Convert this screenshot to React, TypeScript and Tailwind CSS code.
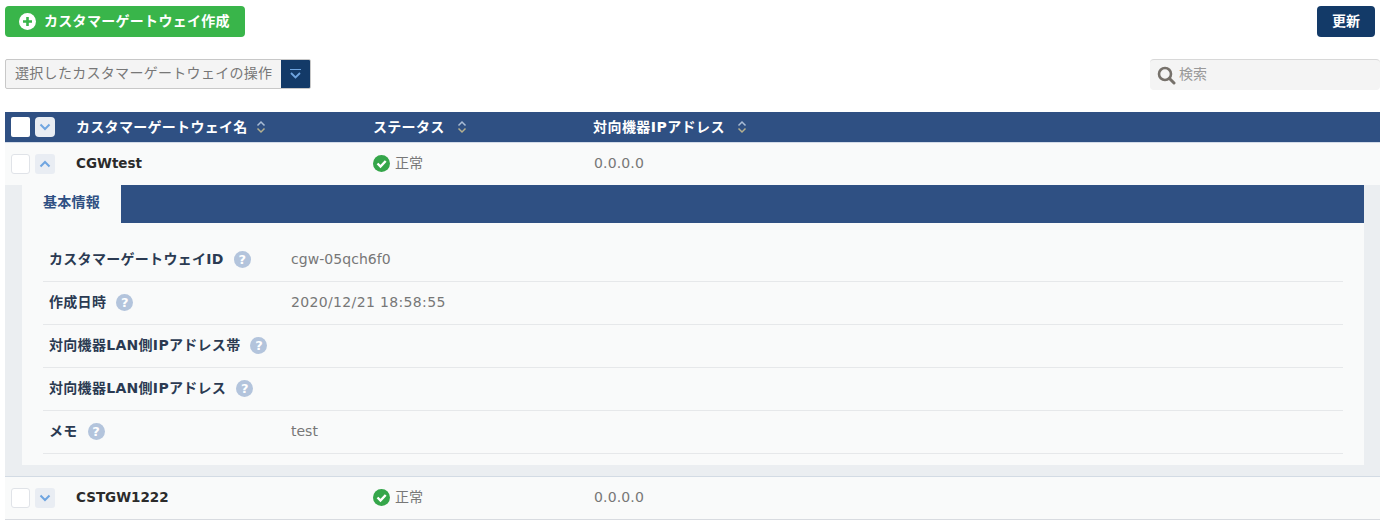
import { Fragment } from 'react';

const font = "font-['DejaVu_Sans','Noto_Sans_CJK_JP',sans-serif]";

const Chevron = ({ up = false }: { up?: boolean }) => (
    <svg width="12" height="8" viewBox="0 0 12 8" className={up ? 'rotate-180' : ''}>
        <path d="M1.5 1.5 6 6l4.5-4.5" fill="none" stroke="#6fa5e0" strokeWidth="2" />
    </svg>
);

const Sort = () => (
    <svg width="10" height="14" viewBox="0 0 10 14">
        <path d="M1.5 5.5 5 2l3.5 3.5" fill="none" stroke="#a9bcd6" strokeWidth="1.5" />
        <path d="M1.5 8.5 5 12l3.5-3.5" fill="none" stroke="#b5b08f" strokeWidth="1.5" />
    </svg>
);

const Help = () => (
    <span className="flex h-[17px] w-[17px] shrink-0 items-center justify-center rounded-full bg-[#b3c4dc] text-[13px] font-bold leading-none tracking-normal text-white">
        ?
    </span>
);

const Check = () => (
    <svg width="17" height="17" viewBox="0 0 17 17" className="shrink-0">
        <circle cx="8.5" cy="8.5" r="8.5" fill="#35a64a" />
        <path d="M4.5 8.5 7.5 11.5 12.7 6" fill="none" stroke="#fff" strokeWidth="2.4" />
    </svg>
);

const Row = ({ name, open }: { name: string; open?: boolean }) => (
    <div className="flex h-[42px] items-center bg-[#f9fafa]">
        <span className="ml-[6px] h-[20px] w-[19px] rounded-[3px] border border-[#e0e3e8] bg-white" />
        <span className="ml-[5px] flex h-[20px] w-[20px] items-center justify-center rounded-[3px] bg-[#e9edf3]">
            <Chevron up={open} />
        </span>
        <span className="ml-[21px] w-[297px] pb-[2px] text-[13.5px] font-bold text-[#2b2b2b]">{name}</span>
        <span className="flex w-[220px] items-center gap-[5px] pb-[2px] text-[14px] text-[#777]">
            <Check />
            正常
        </span>
        <span className="pb-[2px] pl-[1px] text-[14px] tracking-[0.15px] text-[#777]">0.0.0.0</span>
    </div>
);

const details = [
    { label: 'カスタマーゲートウェイID', value: 'cgw-05qch6f0', valueClass: 'tracking-[0.05px]' },
    { label: '作成日時', value: '2020/12/21 18:58:55', valueClass: 'tracking-[0.35px]' },
    { label: '対向機器LAN側IPアドレス帯', value: '', valueClass: '' },
    { label: '対向機器LAN側IPアドレス', value: '', valueClass: '' },
    { label: 'メモ', value: 'test', valueClass: '' },
];

export default function App() {
    return (
        <div className={`${font} h-[527px] w-[1390px] overflow-hidden bg-white pl-[5px] pr-[10px] pt-[6px] text-[14px]`}>
            <div className="flex items-start justify-between">
                <button className="flex h-[31px] w-[240px] items-center rounded-[4px] bg-[#39b54a] pl-[14px] text-[14px] font-bold tracking-[0.3px] text-white">
                    <svg width="17" height="17" viewBox="0 0 17 17" className="mr-[8px]">
                        <circle cx="8.5" cy="8.5" r="8.5" fill="#fff" />
                        <path d="M8.5 4v9M4 8.5h9" stroke="#39b54a" strokeWidth="2.6" />
                    </svg>
                    カスタマーゲートウェイ作成
                </button>
                <button className="mr-[5px] h-[31px] w-[58px] rounded-[4px] bg-[#133a68] text-[14px] font-bold text-white">更新</button>
            </div>

            <div className="mt-[22px] flex items-start justify-between">
                <div className="flex h-[30px] w-[306px] overflow-hidden rounded-[2px] border border-[#c8c8c8] bg-[#f4f4f4]">
                    <span className="flex-1 truncate pl-[9px] text-[14px] leading-[27px] tracking-[0.3px] text-[#777]">選択したカスタマーゲートウェイの操作</span>
                    <span className="flex w-[29px] flex-col items-center justify-center gap-[2px] bg-[#133a68]">
                        <span className="h-[1px] w-[11px] bg-[#6fa5e0]" />
                        <svg width="11" height="7" viewBox="0 0 11 7">
                            <path d="M1 1 5.5 5.5 10 1" fill="none" stroke="#6fa5e0" strokeWidth="1.8" />
                        </svg>
                    </span>
                </div>
                <div className="flex h-[31px] w-[230px] items-center rounded-[4px] border-t border-[#d8d8d8] bg-[#f4f4f4] pl-[7px]">
                    <svg width="19" height="19" viewBox="0 0 19 19">
                        <circle cx="8" cy="8" r="6" fill="none" stroke="#76716b" strokeWidth="2.6" />
                        <path d="M12.5 12.5 17 17" stroke="#76716b" strokeWidth="3" strokeLinecap="round" />
                    </svg>
                    <span className="ml-[3px] pb-[2px] text-[14px] text-[#999]">検索</span>
                </div>
            </div>

            <div className="mt-[22px]">
                <div className="flex h-[31px] items-center border-b border-[#d3dbe8] bg-[#2f5083] text-[14px] font-bold tracking-[0.3px] text-white">
                    <span className="ml-[6px] h-[20px] w-[19px] rounded-[2px] bg-white" />
                    <span className="ml-[5px] flex h-[20px] w-[20px] items-center justify-center rounded-[4px] bg-[#e9edf3]">
                        <Chevron />
                    </span>
                    <span className="ml-[21px] flex w-[297px] items-center gap-[8px]">
                        カスタマーゲートウェイ名 <Sort />
                    </span>
                    <span className="flex w-[220px] items-center gap-[12px]">
                        ステータス <Sort />
                    </span>
                    <span className="flex items-center gap-[12px] tracking-[0.45px]">
                        対向機器IPアドレス <Sort />
                    </span>
                </div>

                <Row name="CGWtest" open />

                <div className="h-[292px] border-b border-[#d3dbe4] bg-[#ebeef1] pl-[17px] pr-[16px] pb-[11px]">
                    <div className="h-full bg-[#f9fafa]">
                        <div className="flex h-[38px] bg-[#2f5083]">
                            <span className="w-[99px] bg-[#f9fafa] pt-[7px] text-center text-[14px] font-bold tracking-[0.3px] text-[#2f5083]">基本情報</span>
                        </div>
                        <div className="mx-[21px] mt-[16px] grid grid-cols-[248px_1fr]">
                            {details.map((d) => (
                                <Fragment key={d.label}>
                                    <div className="flex h-[43px] items-center gap-[10px] border-b border-[#e6e8ea] pb-[2px] pl-[6px] text-[14px] font-bold tracking-[0.3px] text-[#2b3a52]">
                                        {d.label}
                                        <Help />
                                    </div>
                                    <div className={`flex h-[43px] items-center border-b border-[#e6e8ea] pb-[2px] text-[14px] text-[#777] ${d.valueClass}`}>{d.value}</div>
                                </Fragment>
                            ))}
                        </div>
                    </div>
                </div>

                <div className="border-b border-[#d8dbe0]">
                    <Row name="CSTGW1222" />
                </div>
            </div>
        </div>
    );
}
